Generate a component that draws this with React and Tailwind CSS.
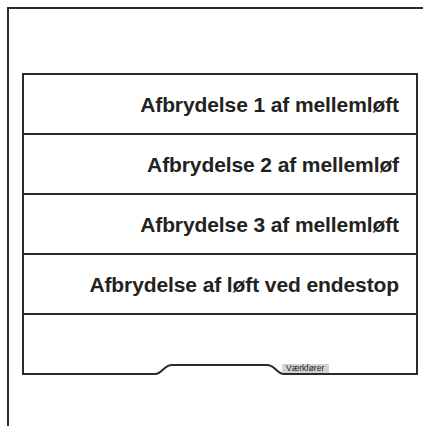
import React from 'react'

const rows = [
  'Afbrydelse 1 af mellemløft',
  'Afbrydelse 2 af mellemløf',
  'Afbrydelse 3 af mellemløft',
  'Afbrydelse af løft ved endestop',
]

export default function App() {
  return (
    <div className="w-[423px] h-[426px] overflow-hidden bg-white font-['Liberation_Sans',Arial,sans-serif]">
      <div className="ml-[7px] mt-[7px] w-[440px] h-[440px] border-t-2 border-l-2 border-[#2a2a2a]">
        <div className="relative ml-[13px] mt-[64px] w-[396px] border-t-2 border-x-2 border-[#2a2a2a]">
          {rows.map(label => (
            <div key={label} className="h-[60px] border-b-2 border-[#2a2a2a] flex items-center justify-end pr-[17px] pt-[1px]">
              <span className="text-[21px] font-bold text-[#222] tracking-[-0.1px]">{label}</span>
            </div>
          ))}
          <div className="h-[59px]" />
          <svg className="absolute left-[-2px] bottom-[-2px]" width="396" height="16" viewBox="0 0 396 16">
            <path d="M0 14 L133 14 C140 14 142 5 150 5 L245 5 C253 5 255 14 262 14 L396 14"
              fill="none" stroke="#2a2a2a" strokeWidth="2" />
          </svg>
          <div className="absolute left-[258px] bottom-[1px] w-[47px] h-[9px] bg-[#d2d2d2] text-[8.5px] leading-[9px] text-[#222] pl-[4px]">
            Værkfører
          </div>
        </div>
      </div>
    </div>
  )
}
